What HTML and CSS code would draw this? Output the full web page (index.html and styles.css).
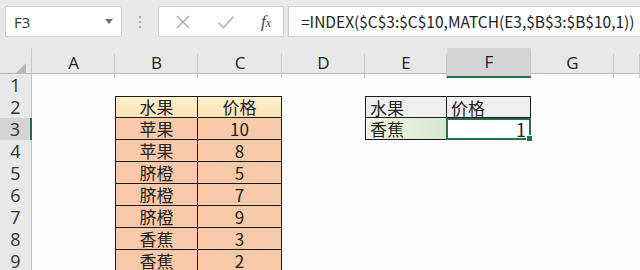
FILE: index.html
```html
<!DOCTYPE html>
<html lang="zh-CN">
<head>
    <meta charset="UTF-8">
    <title>INDEX MATCH</title>
    <link rel="stylesheet" href="styles.css">
</head>
<body>
    <div class="toolbar">
        <div class="namebox">
            <span>F3</span>
            <span class="drop"></span>
        </div>
        <div class="dots">
            <i></i><i></i><i></i>
        </div>
        <div class="fnbox">
            <svg class="ico" width="16" height="16" viewBox="0 0 16 16">
                <path d="M2 2 L14 14 M14 2 L2 14" stroke="#a6a6a6" stroke-width="1.2" fill="none"/>
            </svg>
            <svg class="ico" width="18" height="14" viewBox="0 0 18 14">
                <path d="M1.5 7.5 L6.5 12.5 L16.5 1.5" stroke="#b3b3b3" stroke-width="1.6" fill="none"/>
            </svg>
            <span class="fx">f<sub>x</sub></span>
        </div>
        <div class="formula">=INDEX($C$3:$C$10,MATCH(E3,$B$3:$B$10,1))</div>
    </div>

    <div class="sheet">
        <div class="colhead">
            <div class="corner"><span class="tri"></span></div>
            <div class="ch">A</div>
            <div class="ch">B</div>
            <div class="ch">C</div>
            <div class="ch">D</div>
            <div class="ch">E</div>
            <div class="ch active">F</div>
            <div class="ch">G</div>
            <div class="ch"></div>
        </div>

        <div class="row">
            <div class="rh">1</div>
            <div></div><div></div><div></div><div></div><div></div><div></div><div></div><div></div>
        </div>
        <div class="row">
            <div class="rh">2</div>
            <div></div>
            <div class="t head left top">水果</div>
            <div class="t head top">价格</div>
            <div></div>
            <div class="t look left top">水果</div>
            <div class="t look top">价格</div>
            <div></div><div></div>
        </div>
        <div class="row">
            <div class="rh active">3</div>
            <div></div>
            <div class="t data left">苹果</div>
            <div class="t data">10</div>
            <div></div>
            <div class="t key left">香蕉</div>
            <div class="t sel">1<span class="handle"></span></div>
            <div></div><div></div>
        </div>
        <div class="row">
            <div class="rh">4</div>
            <div></div>
            <div class="t data left">苹果</div>
            <div class="t data">8</div>
            <div></div><div></div><div></div><div></div><div></div>
        </div>
        <div class="row">
            <div class="rh">5</div>
            <div></div>
            <div class="t data left">脐橙</div>
            <div class="t data">5</div>
            <div></div><div></div><div></div><div></div><div></div>
        </div>
        <div class="row">
            <div class="rh">6</div>
            <div></div>
            <div class="t data left">脐橙</div>
            <div class="t data">7</div>
            <div></div><div></div><div></div><div></div><div></div>
        </div>
        <div class="row">
            <div class="rh">7</div>
            <div></div>
            <div class="t data left">脐橙</div>
            <div class="t data">9</div>
            <div></div><div></div><div></div><div></div><div></div>
        </div>
        <div class="row">
            <div class="rh">8</div>
            <div></div>
            <div class="t data left">香蕉</div>
            <div class="t data">3</div>
            <div></div><div></div><div></div><div></div><div></div>
        </div>
        <div class="row">
            <div class="rh">9</div>
            <div></div>
            <div class="t data left">香蕉</div>
            <div class="t data">2</div>
            <div></div><div></div><div></div><div></div><div></div>
        </div>
    </div>
</body>
</html>
```

FILE: styles.css
```css
body
{
    margin: 0;
    background-color: #fdfcfe;
    font-family: "Noto Sans CJK SC", "Noto Sans", sans-serif;
    color: #222222;
    overflow: hidden;
}
.toolbar
{
    display: flex;
    align-items: center;
    height: 48px;
    padding-bottom: 5px;
    box-sizing: border-box;
    background-color: #e8e8e8;
}
.namebox
{
    display: flex;
    align-items: center;
    justify-content: space-between;
    margin-left: 5px;
    width: 117px;
    height: 31px;
    padding: 0 8px 0 8px;
    box-sizing: border-box;
    background-color: #ffffff;
    border: 1px solid #cfcfcf;
    border-radius: 2px;
    font-family: "Open Sans", sans-serif;
    font-size: 15px;
    color: #333333;
}
.drop
{
    width: 0;
    height: 0;
    border-left: 4px solid transparent;
    border-right: 4px solid transparent;
    border-top: 5px solid #6b6b6b;
}
.dots
{
    display: flex;
    flex-direction: column;
    gap: 3px;
    width: 36px;
    align-items: center;
}
.dots i
{
    display: block;
    width: 2px;
    height: 2px;
    background-color: #b0b0b0;
}
.fnbox
{
    display: flex;
    align-items: center;
    justify-content: space-between;
    width: 126px;
    height: 31px;
    padding: 0 12px 0 16px;
    box-sizing: border-box;
    background-color: #ffffff;
    border: 1px solid #cfcfcf;
    border-radius: 2px;
}
.fx
{
    font-family: "Liberation Serif", serif;
    font-style: italic;
    font-size: 17px;
    color: #444444;
}
.fx sub
{
    font-size: 12px;
    vertical-align: 0;
}
.formula
{
    flex: 1;
    height: 31px;
    margin-left: 4px;
    padding-left: 12px;
    box-sizing: border-box;
    background-color: #ffffff;
    border: 1px solid #cfcfcf;
    border-right: none;
    font-size: 15.5px;
    line-height: 29px;
    color: #222222;
    white-space: nowrap;
}
.colhead,
.row
{
    display: grid;
    grid-template-columns: 32px 83px 83px 84px 83px 82px 84px 83px 1fr;
}
.colhead
{
    height: 26px;
    background-color: #e8e8e8;
    border-bottom: 1px solid #b8b8b8;
    box-sizing: border-box;
}
.corner
{
    position: relative;
    border-right: 1px solid #c8c8c8;
}
.tri
{
    position: absolute;
    right: 5px;
    bottom: 4px;
    width: 0;
    height: 0;
    border-left: 11px solid transparent;
    border-bottom: 11px solid #b8b8b8;
}
.ch
{
    position: relative;
    text-align: center;
    font-family: "Open Sans", sans-serif;
    font-size: 17px;
    line-height: 30px;
    color: #222222;
}
.ch::after
{
    content: "";
    position: absolute;
    right: 0;
    top: 6px;
    bottom: 0;
    width: 1px;
    background-color: #c8c8c8;
}
.ch.active
{
    background-color: #d4d4d4;
    border-bottom: 2px solid #217346;
    line-height: 28px;
}
.row
{
    height: 22px;
}
.rh
{
    box-sizing: border-box;
    background-color: #e8e8e8;
    border-right: 1px solid #bdbdbd;
    border-bottom: 1px solid #cdcdcd;
    text-align: center;
    font-family: "Open Sans", sans-serif;
    font-size: 18px;
    line-height: 22px;
    color: #333333;
}
.rh.active
{
    background-color: #d4d4d4;
    border-right: 2px solid #217346;
}
.t
{
    position: relative;
    box-sizing: border-box;
    height: 22px;
    font-size: 17px;
    line-height: 21px;
    border-right: 1px solid #1a1a1a;
    border-bottom: 1px solid #1a1a1a;
}
.t.left
{
    border-left: 1px solid #1a1a1a;
}
.t.top
{
    border-top: 1px solid #1a1a1a;
    line-height: 20px;
}
.head
{
    text-align: center;
    background: linear-gradient(#fdf0cf, #fbe3b6);
}
.data
{
    text-align: center;
    background-color: #f8caa9;
}
.look
{
    padding: 1px 0 0 4px;
    font-size: 17px;
    background-color: #efefef;
}
.key
{
    padding-left: 4px;
    font-size: 17px;
    background: linear-gradient(to right, #f5f6e3, #d6e8d0);
}
.sel
{
    padding-right: 3px;
    text-align: right;
    font-size: 18px;
    background-color: #ffffff;
    border: 2px solid #217346;
    margin-left: -1px;
    line-height: 19px;
}
.handle
{
    position: absolute;
    right: -4px;
    bottom: -4px;
    width: 5px;
    height: 5px;
    background-color: #217346;
    border: 1px solid #ffffff;
}
```
